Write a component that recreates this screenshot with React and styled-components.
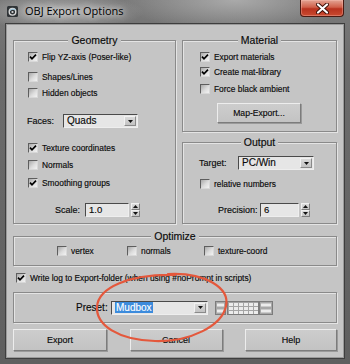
import styled, { createGlobalStyle } from "styled-components";

const GlobalStyle = createGlobalStyle`
  html, body {
    margin: 0;
    padding: 0;
    background: #5a5a5a;
  }
  * {
    box-sizing: border-box;
  }
`;

const Window = styled.div`
  position: relative;
  width: 350px;
  height: 364px;
  overflow: hidden;
  background:
    radial-gradient(ellipse 120px 26px at 60px 12px, rgba(220, 220, 220, 0.55), transparent 70%),
    radial-gradient(ellipse 140px 40px at 235px 0px, rgba(175, 175, 175, 0.9), transparent 80%),
    linear-gradient(180deg, #7a7a7a 0%, #6c6c6c 20%, #5f5f5f 100%);
  font-family: "Liberation Sans", Arial, sans-serif;
  color: #0a0a0a;
`;

const TitleBar = styled.div`
  display: flex;
  align-items: flex-start;
  height: 24px;
  padding-left: 7px;
`;

const AppIcon = styled.svg`
  margin-top: 6px;
  flex: none;
`;

const TitleText = styled.div`
  margin-left: 7px;
  margin-top: 3px;
  font-family: "Open Sans", "Noto Sans", sans-serif;
  font-size: 11px;
  line-height: 16px;
  color: #000;
  text-shadow: 0 0 6px rgba(255, 255, 255, 0.9), 0 0 10px rgba(255, 255, 255, 0.6);
`;

const CloseButton = styled.div`
  margin-left: auto;
  margin-right: 6px;
  width: 44px;
  height: 17px;
  display: flex;
  align-items: center;
  justify-content: center;
  border: 1px solid #4b1a12;
  border-top: none;
  border-radius: 0 0 4px 4px;
  background: linear-gradient(180deg, #e3a494 0%, #d0604a 45%, #b8321e 55%, #c94a30 100%);
  box-shadow: inset 0 0 0 1px rgba(255, 200, 190, 0.35);
`;

const Client = styled.div`
  margin: 0 6px;
  height: 334px;
  background: #c5c5c5;
  border: 1px solid #9a9a9a;
  box-shadow: 0 0 0 1px #3e3e3e;
  padding: 10px 6px 0 6px;
  display: flex;
  flex-direction: column;
  -webkit-text-stroke: 0.15px #0a0a0a;
`;

const TopRow = styled.div`
  display: grid;
  grid-template-columns: 163px 155px;
  column-gap: 6px;
`;

const Column = styled.div`
  display: flex;
  flex-direction: column;
  gap: ${(p) => p.$gap || 0}px;
`;

const Group = styled.fieldset`
  margin: 0;
  margin-top: ${(p) => p.$top || 0}px;
  padding: 0;
  min-width: 0;
  height: ${(p) => p.$height}px;
  border: 1px solid #8a8a8a;
  box-shadow: inset 1px 1px 0 #e4e4e4, 1px 1px 0 #e4e4e4;
  display: flex;
  flex-direction: column;
`;

const Legend = styled.legend`
  margin: 0 auto;
  padding: 0 3px;
  font-size: 10.5px;
  line-height: 10px;
  height: 10px;
  background: #c5c5c5;
`;

const Row = styled.div`
  display: flex;
  align-items: center;
  margin-top: ${(p) => p.$top || 0}px;
  margin-left: ${(p) => p.$left || 0}px;
  width: ${(p) => (p.$width ? `${p.$width}px` : "auto")};
  height: ${(p) => p.$height || 10}px;
  flex: none;
`;

const Box = styled.div`
  width: 10px;
  height: 10px;
  flex: none;
  border: 1px solid;
  border-color: #5e5e5e #d8d8d8 #d8d8d8 #5e5e5e;
  background: linear-gradient(135deg, #a9a9a9 0%, #dcdcdc 55%, #f2f2f2 100%);
  display: flex;
  align-items: center;
  justify-content: center;
`;

const Label = styled.span`
  font-size: ${(p) => p.$size || 8.4}px;
  line-height: 10px;
  white-space: nowrap;
  margin-left: ${(p) => p.$left || 0}px;
  width: ${(p) => (p.$width ? `${p.$width}px` : "auto")};
  text-align: ${(p) => p.$align || "left"};
  flex: none;
`;

const Check = ({ on, children, size }) => (
  <>
    <Box>
      {on && (
        <svg width="8" height="8" viewBox="0 0 8 8">
          <path d="M1 3.6 L3 5.8 L7 1.6" fill="none" stroke="#000" strokeWidth="1.7" />
        </svg>
      )}
    </Box>
    <Label $left={4} $size={size}>
      {children}
    </Label>
  </>
);

const Combo = styled.div`
  display: flex;
  align-items: stretch;
  width: ${(p) => p.$width}px;
  height: 14px;
  flex: none;
  border: 1px solid;
  border-color: #4a4a4a #eeeeee #eeeeee #4a4a4a;
  background: #e6e6e6;
`;

const ComboText = styled.div`
  flex: 1;
  font-size: 10px;
  line-height: 12px;
  padding-left: 3px;
  white-space: nowrap;
  overflow: hidden;
`;

const Selected = styled.span`
  background: #3c8bdc;
  color: #fff;
  -webkit-text-stroke: 0.15px #fff;
  padding: 0 1px;
`;

const ComboButton = styled.div`
  width: 12px;
  flex: none;
  margin: 1px;
  background: linear-gradient(180deg, #dadada, #c2c2c2);
  border: 1px solid;
  border-color: #f2f2f2 #8a8a8a #8a8a8a #f2f2f2;
  display: flex;
  align-items: center;
  justify-content: center;
`;

const Arrow = () => (
  <svg width="5" height="3" viewBox="0 0 5 3">
    <path d="M0 0 H5 L2.5 3 Z" fill="#111" />
  </svg>
);

const Dropdown = ({ width, children }) => (
  <Combo $width={width}>
    <ComboText>{children}</ComboText>
    <ComboButton>
      <Arrow />
    </ComboButton>
  </Combo>
);

const SpinInput = styled.div`
  width: ${(p) => p.$width}px;
  height: 14px;
  flex: none;
  border: 1px solid;
  border-color: #4a4a4a #eeeeee #eeeeee #4a4a4a;
  background: #e6e6e6;
  font-size: 9.5px;
  line-height: 12px;
  padding-left: 3px;
`;

const SpinArrows = styled.div`
  display: flex;
  flex-direction: column;
  width: 9px;
  height: 14px;
  margin-left: 2px;
  flex: none;
`;

const SpinHalf = styled.div`
  flex: 1;
  background: linear-gradient(180deg, #dcdcdc, #c4c4c4);
  border: 1px solid;
  border-color: #f0f0f0 #7e7e7e #7e7e7e #f0f0f0;
  display: flex;
  align-items: center;
  justify-content: center;
`;

const Spinner = ({ width, value }) => (
  <>
    <SpinInput $width={width}>{value}</SpinInput>
    <SpinArrows>
      <SpinHalf>
        <svg width="5" height="3" viewBox="0 0 5 3">
          <path d="M0 3 H5 L2.5 0 Z" fill="#111" />
        </svg>
      </SpinHalf>
      <SpinHalf>
        <Arrow />
      </SpinHalf>
    </SpinArrows>
  </>
);

const Button = styled.div`
  width: ${(p) => p.$width}px;
  height: ${(p) => p.$height || 22}px;
  flex: none;
  display: flex;
  align-items: center;
  justify-content: center;
  font-size: ${(p) => p.$size || 9}px;
  background: linear-gradient(180deg, #cdcdcd 0%, #c3c3c3 100%);
  border: 1px solid;
  border-color: #ededed #7c7c7c #7c7c7c #ededed;
  box-shadow: 1px 1px 0 #9a9a9a;
`;

const PresetBox = styled.div`
  margin-top: 9px;
  height: 31px;
  border: 1px solid #8a8a8a;
  box-shadow: inset 1px 1px 0 #e4e4e4, 1px 1px 0 #e4e4e4;
  display: flex;
  align-items: center;
  padding-left: 62px;
`;

const ButtonRow = styled.div`
  display: flex;
  justify-content: space-between;
  margin-top: 6px;
`;

const Ellipse = styled.svg`
  position: absolute;
  left: 0;
  top: 0;
  pointer-events: none;
`;

const PresetTools = () => (
  <svg width="58" height="14" viewBox="0 0 58 14" style={{ marginLeft: 7 }}>
    <rect x="0.5" y="0.5" width="10" height="13" fill="#a8a8a8" stroke="#7c7c7c" />
    <rect x="2" y="2.5" width="7" height="3" fill="#ececec" />
    <rect x="2" y="8.5" width="7" height="3" fill="#ececec" />
    <rect x="12.5" y="0.5" width="31" height="13" fill="#a4a4a4" stroke="#7c7c7c" />
    {[0, 1, 2].map((r) =>
      [0, 1, 2, 3, 4, 5].map((c) => (
        <rect key={`${r}-${c}`} x={14 + c * 5} y={2 + r * 4} width="4" height="3" fill="#ececec" />
      ))
    )}
    <rect x="44.5" y="0.5" width="13" height="13" fill="#a8a8a8" stroke="#7c7c7c" />
    <rect x="46" y="2.5" width="10" height="3" fill="#ececec" />
    <rect x="46" y="8.5" width="10" height="3" fill="#ececec" />
  </svg>
);

export default function App() {
  return (
    <>
      <GlobalStyle />
      <Window>
        <TitleBar>
          <AppIcon width="11" height="11" viewBox="0 0 11 11">
            <rect x="0" y="0" width="11" height="11" rx="1.5" fill="#2f3336" />
            <circle cx="5.5" cy="5.8" r="3.3" fill="none" stroke="#d8d8d8" strokeWidth="1.4" />
            <path d="M3 4.5 Q5.5 2 8.6 4" fill="none" stroke="#9ec4d8" strokeWidth="1.2" />
            <circle cx="5.5" cy="6" r="1.1" fill="#d8d8d8" />
          </AppIcon>
          <TitleText>OBJ Export Options</TitleText>
          <CloseButton>
            <svg width="13" height="11" viewBox="0 0 13 11">
              <path d="M2 1.5 L11 9.5 M11 1.5 L2 9.5" stroke="#3a0d06" strokeWidth="4" strokeLinecap="round" />
              <path d="M2 1.5 L11 9.5 M11 1.5 L2 9.5" stroke="#fff" strokeWidth="2.2" strokeLinecap="round" />
            </svg>
          </CloseButton>
        </TitleBar>

        <Client>
          <TopRow>
            <Group $height={189}>
              <Legend>Geometry</Legend>
              <Row $top={7} $left={14}>
                <Check on>Flip YZ-axis (Poser-like)</Check>
              </Row>
              <Row $top={10} $left={14}>
                <Check>Shapes/Lines</Check>
              </Row>
              <Row $top={6} $left={14}>
                <Check>Hidden objects</Check>
              </Row>
              <Row $top={16} $left={13} $height={14}>
                <Label $size={9} $width={36}>
                  Faces:
                </Label>
                <Dropdown width={75}>Quads</Dropdown>
              </Row>
              <Row $top={15} $left={14}>
                <Check on>Texture coordinates</Check>
              </Row>
              <Row $top={7} $left={14}>
                <Check>Normals</Check>
              </Row>
              <Row $top={8} $left={14}>
                <Check on>Smoothing groups</Check>
              </Row>
              <Row $top={15} $left={41} $height={14}>
                <Label $size={9} $width={30}>
                  Scale:
                </Label>
                <Spinner width={44} value="1.0" />
              </Row>
            </Group>

            <Column $gap={5}>
              <Group $height={97}>
                <Legend>Material</Legend>
                <Row $top={7} $left={17}>
                  <Check on>Export materials</Check>
                </Row>
                <Row $top={5} $left={17}>
                  <Check on>Create mat-library</Check>
                </Row>
                <Row $top={7} $left={17}>
                  <Check>Force black ambient</Check>
                </Row>
                <Row $top={9} $left={34} $height={20}>
                  <Button $width={84} $height={20} $size={8.6}>
                    Map-Export...
                  </Button>
                </Row>
              </Group>
              <Group $height={87}>
                <Legend>Output</Legend>
                <Row $top={9} $left={16} $height={14}>
                  <Label $size={9} $width={39}>
                    Target:
                  </Label>
                  <Dropdown width={76}>PC/Win</Dropdown>
                </Row>
                <Row $top={9} $left={17}>
                  <Check>relative numbers</Check>
                </Row>
                <Row $top={14} $left={35} $height={14}>
                  <Label $size={9} $width={42}>
                    Precision:
                  </Label>
                  <Spinner width={39} value="6" />
                </Row>
              </Group>
            </Column>
          </TopRow>

          <Group $height={35} $top={7}>
            <Legend>Optimize</Legend>
            <Row $top={5} $left={43}>
              <Row $width={70}>
                <Check>vertex</Check>
              </Row>
              <Row $width={77}>
                <Check>normals</Check>
              </Row>
              <Row>
                <Check>texture-coord</Check>
              </Row>
            </Row>
          </Group>

          <Row $top={7} $left={3}>
            <Check on>Write log to Export-folder (when using #noPrompt in scripts)</Check>
          </Row>

          <PresetBox>
            <Label $size={10} $width={31} $align="right">
              Preset:
            </Label>
            <Row $left={4} $height={14}>
              <Combo $width={97}>
                <ComboText>
                  <Selected>Mudbox</Selected>
                </ComboText>
                <ComboButton>
                  <Arrow />
                </ComboButton>
              </Combo>
            </Row>
            <PresetTools />
          </PresetBox>

          <ButtonRow>
            <Button $width={94}>Export</Button>
            <Button $width={93}>Cancel</Button>
            <Button $width={92}>Help</Button>
          </ButtonRow>
        </Client>

        <Ellipse width="350" height="364" viewBox="0 0 350 364">
          <path
            d="M168 274 C 205 272, 230 288, 226 306 C 222 326, 190 342, 155 341 C 118 340, 96 325, 97 307 C 98 288, 128 274, 175 275"
            fill="none"
            stroke="#e4583c"
            strokeWidth="2.2"
            strokeLinecap="round"
          />
        </Ellipse>
      </Window>
    </>
  );
}
